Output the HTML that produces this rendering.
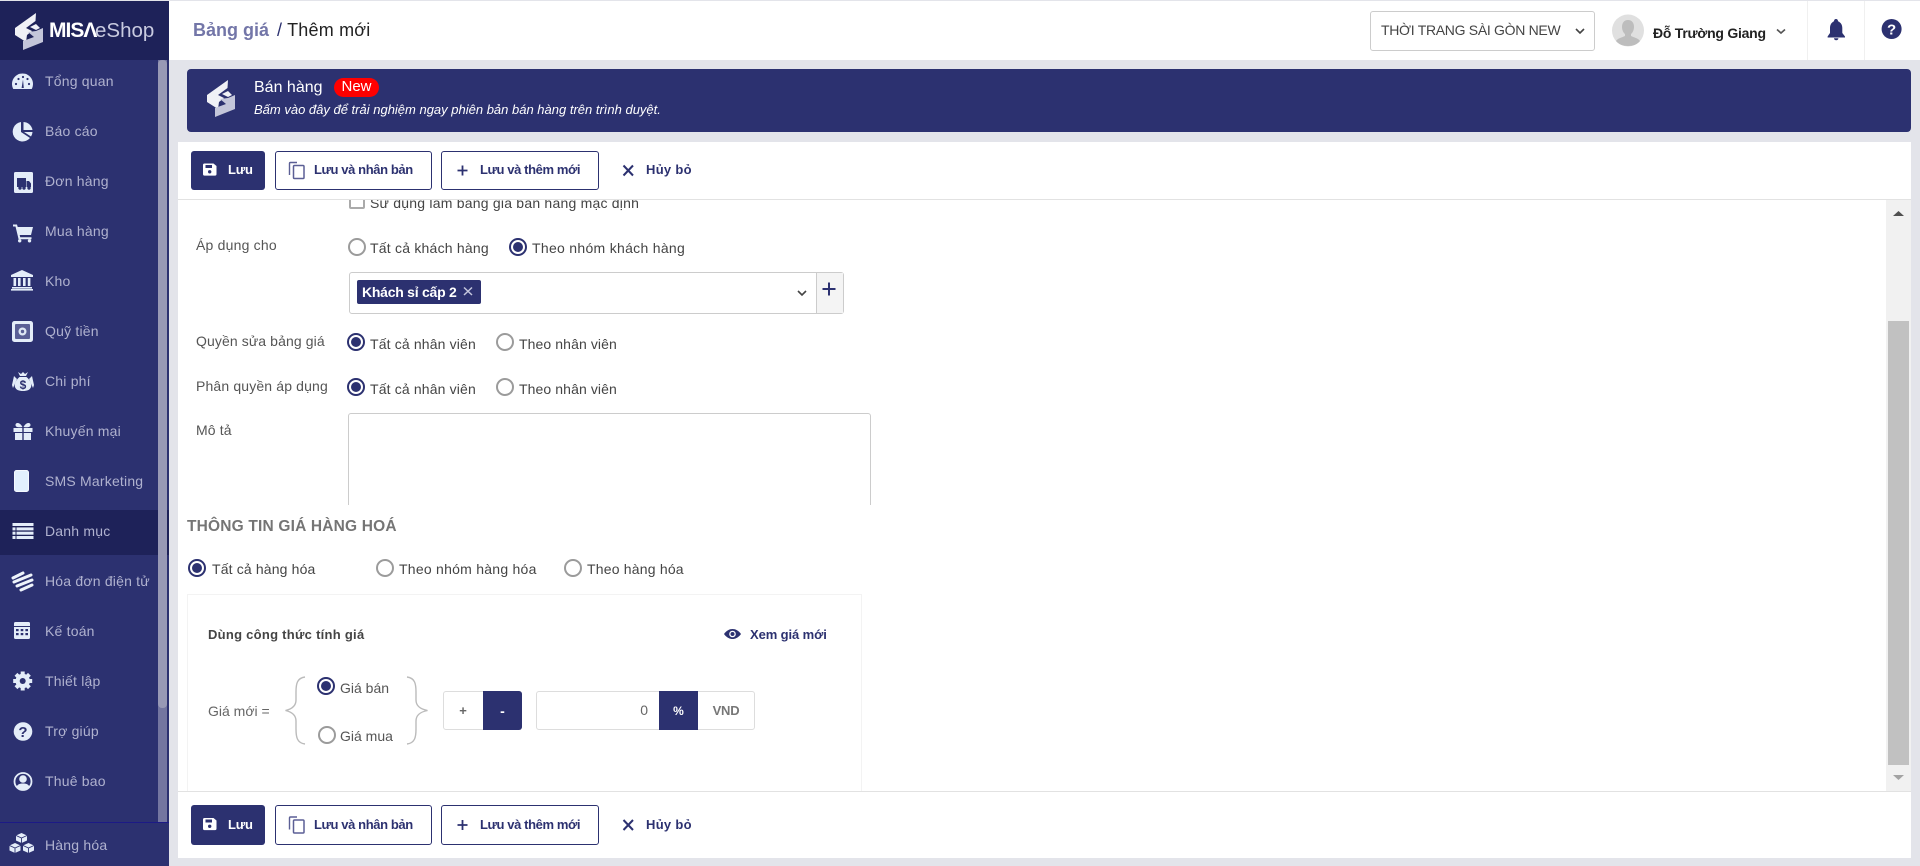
<!DOCTYPE html>
<html lang="vi">
<head>
<meta charset="utf-8">
<title>Bảng giá / Thêm mới</title>
<style>
html,body{margin:0;padding:0;width:1920px;height:866px;overflow:hidden;background:#e3e4ea;font-family:"Liberation Sans",Arial,sans-serif;font-size:14px;color:#444}
div,span{box-sizing:border-box}
.a{position:absolute}
.t{position:absolute;white-space:nowrap;line-height:20px;height:20px}
.m{color:#b0b2cf;left:45px;font-size:14px;letter-spacing:.2px}
.f{color:#444;font-size:14px;letter-spacing:.18px}
.l{color:#555;font-size:14px;left:196px;letter-spacing:.14px}
.r{position:absolute;width:18px;height:18px;border-radius:50%;border:2px solid #9b9b9b;background:#fff}
.r.on{border-color:#2c3170}
.r.on:after{content:"";position:absolute;left:2px;top:2px;width:10px;height:10px;border-radius:50%;background:#2c3170}
.b{position:absolute;border:1px solid #2c3170;border-radius:3px;background:#fff;height:39px}
.bt{color:#2c3170;font-weight:bold;font-size:13px;letter-spacing:-.4px}
</style>
</head>
<body>
<div class="a" style="left:0;top:0;width:1920px;height:1px;background:#e3e4ea"></div>
<!-- header -->
<div class="a" style="left:169px;top:1px;width:1751px;height:59px;background:#fff"></div>
<div class="a" style="left:1807px;top:1px;width:1px;height:59px;background:#f0f0f0"></div>
<div class="a" style="left:1864px;top:1px;width:1px;height:59px;background:#f0f0f0"></div>
<div class="t" style="left:193px;top:20px;font-size:18px;font-weight:bold;color:#7376a8">Bảng giá</div>
<div class="t" style="left:277px;top:20px;font-size:18px;color:#222;letter-spacing:.2px"><span style="color:#2c3170">/</span> Thêm mới</div>
<div class="a" style="left:1370px;top:11px;width:225px;height:40px;border:1px solid #ccc;border-radius:3px;background:#fff"></div>
<div class="t" style="left:1381px;top:20px;font-size:14px;color:#444;letter-spacing:-.3px">THỜI TRANG SÀI GÒN NEW</div>
<div class="t" style="left:1653px;top:23px;font-size:14px;font-weight:bold;color:#222;letter-spacing:-.25px">Đỗ Trường Giang</div>

<!-- sidebar -->
<div class="a" style="left:0;top:1px;width:169px;height:59px;background:#1e2259"></div>
<div class="a" style="left:0;top:60px;width:169px;height:806px;background:#2c3170"></div>
<div class="a" style="left:0;top:510px;width:169px;height:45px;background:#1e2259"></div>
<div class="a" style="left:158px;top:60px;width:9px;height:762px;background:#7476a0"></div>
<div class="a" style="left:158px;top:60px;width:9px;height:648px;background:#9899b5;border-radius:4px"></div>
<div class="a" style="left:0;top:822px;width:169px;height:1px;background:#1c1a86"></div>
<div class="t" style="left:49px;top:21px;font-size:21px;font-weight:bold;color:#fff;letter-spacing:-1px">MISΛ</div>
<div class="t" style="left:95px;top:21px;font-size:20.5px;color:#c9cbe0">eShop</div>
<div class="t m" style="top:71px">Tổng quan</div>
<div class="t m" style="top:121px">Báo cáo</div>
<div class="t m" style="top:171px">Đơn hàng</div>
<div class="t m" style="top:221px">Mua hàng</div>
<div class="t m" style="top:271px">Kho</div>
<div class="t m" style="top:321px">Quỹ tiền</div>
<div class="t m" style="top:371px">Chi phí</div>
<div class="t m" style="top:421px">Khuyến mại</div>
<div class="t m" style="top:471px">SMS Marketing</div>
<div class="t m" style="top:521px">Danh mục</div>
<div class="t m" style="top:571px">Hóa đơn điện tử</div>
<div class="t m" style="top:621px">Kế toán</div>
<div class="t m" style="top:671px">Thiết lập</div>
<div class="t m" style="top:721px">Trợ giúp</div>
<div class="t m" style="top:771px">Thuê bao</div>
<div class="t m" style="top:835px">Hàng hóa</div>

<!-- banner -->
<div class="a" style="left:187px;top:69px;width:1724px;height:63px;background:#2c3170;border-radius:4px"></div>
<div class="t" style="left:254px;top:78px;font-size:16px;color:#fff">Bán hàng</div>
<div class="a" style="left:334px;top:78px;width:45px;height:19px;border-radius:10px;background:#f00"></div>
<div class="t" style="left:334px;width:45px;text-align:center;top:77px;font-size:15px;color:#fff">New</div>
<div class="t" style="left:254px;top:100px;font-size:13px;font-style:italic;color:#fff">Bấm vào đây để trải nghiệm ngay phiên bản bán hàng trên trình duyệt.</div>

<!-- main panels -->
<div class="a" style="left:178px;top:142px;width:1733px;height:716px;background:#fff"></div>
<div class="a" style="left:178px;top:199px;width:1733px;height:1px;background:#e2e2e2"></div>
<div class="a" style="left:178px;top:791px;width:1733px;height:1px;background:#e2e2e2"></div>
<div class="a" style="left:1886px;top:200px;width:25px;height:591px;background:#f1f1f1"></div>
<div class="a" style="left:1888px;top:321px;width:21px;height:444px;background:#c1c1c1"></div>

<!-- toolbar top -->
<div class="a" style="left:191px;top:151px;width:74px;height:39px;border-radius:3px;background:#2c3170"></div>
<div class="t" style="left:228px;top:160px;color:#fff;font-weight:bold;font-size:13px;letter-spacing:-.2px">Lưu</div>
<div class="b" style="left:275px;top:151px;width:157px"></div>
<div class="t bt" style="left:314px;top:160px">Lưu và nhân bản</div>
<div class="b" style="left:441px;top:151px;width:158px"></div>
<div class="t bt" style="left:480px;top:160px">Lưu và thêm mới</div>
<div class="t bt" style="left:646px;top:160px;letter-spacing:.3px">Hủy bỏ</div>
<!-- toolbar bottom -->
<div class="a" style="left:191px;top:805px;width:74px;height:40px;border-radius:3px;background:#2c3170"></div>
<div class="t" style="left:228px;top:815px;color:#fff;font-weight:bold;font-size:13px;letter-spacing:-.2px">Lưu</div>
<div class="b" style="left:275px;top:805px;width:157px;height:40px"></div>
<div class="t bt" style="left:314px;top:815px">Lưu và nhân bản</div>
<div class="b" style="left:441px;top:805px;width:158px;height:40px"></div>
<div class="t bt" style="left:480px;top:815px">Lưu và thêm mới</div>
<div class="t bt" style="left:646px;top:815px;letter-spacing:.3px">Hủy bỏ</div>

<!-- form (clipped scroll area) -->
<div class="a" style="left:178px;top:200px;width:1708px;height:591px;overflow:hidden">
  <div class="a" style="left:-178px;top:-200px;width:1920px;height:866px">
    <div class="a" style="left:349px;top:193px;width:16px;height:16px;border:2px solid #aaa;border-radius:2px"></div>
    <div class="t f" style="left:370px;top:193px;letter-spacing:.22px">Sử dụng làm bảng giá bán hàng mặc định</div>

    <div class="t l" style="top:235px;letter-spacing:.2px">Áp dụng cho</div>
    <div class="r" style="left:348px;top:238px"></div>
    <div class="t f" style="left:370px;top:238px;letter-spacing:.22px">Tất cả khách hàng</div>
    <div class="r on" style="left:509px;top:238px"></div>
    <div class="t f" style="left:532px;top:238px;letter-spacing:.3px">Theo nhóm khách hàng</div>

    <div class="a" style="left:349px;top:272px;width:495px;height:42px;border:1px solid #ccc;border-radius:3px;background:#fff"></div>
    <div class="a" style="left:816px;top:273px;width:27px;height:40px;background:#f4f4f4;border-left:1px solid #ccc"></div>
    <div class="a" style="left:357px;top:280px;width:124px;height:24px;background:#2c3170;border-radius:2px"></div>
    <div class="t" style="left:362px;top:282px;color:#fff;font-size:14px;font-weight:bold;letter-spacing:-.25px">Khách sỉ cấp 2</div>

    <div class="t l" style="top:331px;letter-spacing:.1px">Quyền sửa bảng giá</div>
    <div class="r on" style="left:347px;top:333px"></div>
    <div class="t f" style="left:370px;top:334px;letter-spacing:.15px">Tất cả nhân viên</div>
    <div class="r" style="left:496px;top:333px"></div>
    <div class="t f" style="left:519px;top:334px;letter-spacing:.1px">Theo nhân viên</div>

    <div class="t l" style="top:376px;letter-spacing:.15px">Phân quyền áp dụng</div>
    <div class="r on" style="left:347px;top:378px"></div>
    <div class="t f" style="left:370px;top:379px;letter-spacing:.15px">Tất cả nhân viên</div>
    <div class="r" style="left:496px;top:378px"></div>
    <div class="t f" style="left:519px;top:379px;letter-spacing:.1px">Theo nhân viên</div>

    <div class="t l" style="top:420px">Mô tả</div>
    <div class="a" style="left:348px;top:413px;width:523px;height:100px;border:1px solid #ccc;border-radius:3px;background:#fff"></div>
    <div class="a" style="left:340px;top:505px;width:540px;height:12px;background:#fff"></div>

    <div class="t" style="left:187px;top:517px;font-size:15.5px;font-weight:bold;color:#757575;letter-spacing:.18px">THÔNG TIN GIÁ HÀNG HOÁ</div>
    <div class="r on" style="left:188px;top:559px"></div>
    <div class="t f" style="left:212px;top:559px;letter-spacing:.15px">Tất cả hàng hóa</div>
    <div class="r" style="left:376px;top:559px"></div>
    <div class="t f" style="left:399px;top:559px;letter-spacing:.25px">Theo nhóm hàng hóa</div>
    <div class="r" style="left:564px;top:559px"></div>
    <div class="t f" style="left:587px;top:559px;letter-spacing:.2px">Theo hàng hóa</div>

    <div class="a" style="left:187px;top:594px;width:675px;height:220px;border:1px solid #f3f3f3"></div>
    <div class="t" style="left:208px;top:625px;font-size:13px;font-weight:bold;color:#444;letter-spacing:.27px">Dùng công thức tính giá</div>
    <div class="t bt" style="left:750px;top:625px;letter-spacing:-.1px">Xem giá mới</div>
    <div class="t" style="left:208px;top:701px;font-size:14px;color:#666">Giá mới =</div>
    <div class="r on" style="left:317px;top:677px"></div>
    <div class="t" style="left:340px;top:678px;font-size:14px;color:#555">Giá bán</div>
    <div class="r" style="left:318px;top:726px"></div>
    <div class="t" style="left:340px;top:726px;font-size:14px;color:#555">Giá mua</div>

    <div class="a" style="left:443px;top:691px;width:79px;height:39px;border:1px solid #ddd;border-radius:3px;background:#fff"></div>
    <div class="a" style="left:483px;top:691px;width:39px;height:39px;background:#2c3170;border-radius:0 3px 3px 0"></div>
    <div class="t" style="left:443px;width:40px;text-align:center;top:701px;font-size:13px;font-weight:bold;color:#666">+</div>
    <div class="t" style="left:483px;width:39px;text-align:center;top:701px;font-size:14px;font-weight:bold;color:#fff">-</div>
    <div class="a" style="left:536px;top:691px;width:219px;height:39px;border:1px solid #ddd;border-radius:3px;background:#fff"></div>
    <div class="a" style="left:659px;top:691px;width:39px;height:39px;background:#2c3170"></div>
    <div class="t" style="left:600px;width:48px;text-align:right;top:700px;font-size:14px;color:#666">0</div>
    <div class="t" style="left:659px;width:39px;text-align:center;top:701px;font-size:12px;font-weight:bold;color:#fff">%</div>
    <div class="t" style="left:698px;width:56px;text-align:center;top:701px;font-size:13px;font-weight:bold;color:#777;letter-spacing:-.2px">VND</div>
  </div>
</div>

<!-- icons overlay -->
<svg class="a" style="left:0;top:0" width="1920" height="866" viewBox="0 0 1920 866" xmlns="http://www.w3.org/2000/svg">
  <!-- logo -->
  <g>
    <path d="M36 13L35.5 21L26 28L32 31L27 35L26 42L15 35V28Z" fill="#f0f1f6"/>
    <path d="M30 27L36 24L40 28L36 30Z" fill="#f0f1f6"/>
    <path d="M43 28V42L23 50V41L34 37L28 32L36 31Z" fill="#c4c6da"/>
  </g>
  <g transform="translate(192,67)">
    <path d="M36 13L35.5 21L26 28L32 31L27 35L26 42L15 35V28Z" fill="#f0f1f6"/>
    <path d="M30 27L36 24L40 28L36 30Z" fill="#f0f1f6"/>
    <path d="M43 28V42L23 50V41L34 37L28 32L36 31Z" fill="#c4c6da"/>
  </g>
  <g fill="#e4edf9">
    <!-- gauge -->
    <path d="M13.3 89A10.5 10.5 0 1 1 31.7 89Z"/>
    <g fill="#2c3170"><circle cx="16" cy="84" r="1.1"/><circle cx="18.5" cy="79" r="1.1"/><circle cx="23" cy="77" r="1.1"/><circle cx="27.5" cy="79" r="1.1"/><circle cx="29" cy="84" r="1.1"/><path d="M21.6 88L23 79.5L23.8 88Z"/></g>
    <!-- pie -->
    <path d="M21 132V122A9.8 9.8 0 1 0 30 138Z"/>
    <path d="M23.5 122A9.5 9.5 0 0 1 32.5 130H23.5Z"/>
    <path d="M24 132H32.5A9.5 9.5 0 0 1 31 136.5Z"/>
    <!-- truck -->
    <rect x="14" y="172" width="19" height="21" rx="1.5"/>
    <g fill="#2c3170"><rect x="17" y="178" width="9" height="9"/><path d="M26.5 181H29L31 183.5V187H26.5Z"/><circle cx="20" cy="188" r="1.7"/><circle cx="24" cy="188" r="1.7"/><circle cx="29" cy="188" r="1.7"/></g>
    <!-- cart -->
    <path d="M13 224.5h4l.7 2.5H33l-2 8H19.7l.5 2.2H31.5v2H18.6L15.5 226.5H13z"/>
    <circle cx="19.7" cy="240.8" r="1.7"/><circle cx="29.5" cy="240.8" r="1.7"/>
    <!-- bank -->
    <path d="M22 270L33 275V277H11V275Z"/>
    <rect x="13.5" y="278" width="2.6" height="8"/><rect x="18" y="278" width="2.6" height="8"/><rect x="23" y="278" width="2.6" height="8"/><rect x="27.8" y="278" width="2.6" height="8"/>
    <rect x="12" y="287" width="20" height="1.6"/><rect x="11" y="289" width="22" height="1.6"/>
    <!-- safe -->
    <rect x="12" y="321" width="21" height="21" rx="2.5"/>
    <rect x="15" y="324" width="15" height="15" rx="1" fill="#5a5f96"/>
    <circle cx="22.5" cy="331.5" r="4" fill="#dfe8f5"/><circle cx="22.5" cy="331.5" r="1.7" fill="#5a5f96"/>
    <!-- money bag -->
    <path d="M18 372L20 376H26L28 372L25 374L23 372L21 374Z"/>
    <path d="M19.5 377H26.5C30 380 32 384 31 387C30 390 27 391 23 391C19 391 16 390 15 387C14 384 16 380 19.5 377Z"/>
    <path d="M14 376L17 379L13 388L12 385Z M32 376L29 379L33 388L34 385Z"/>
    <text x="23" y="389" font-size="12" font-weight="bold" text-anchor="middle" fill="#2c3170" font-family="Liberation Sans">$</text>
    <!-- gift -->
    <path d="M22.5 427C20 422 15.5 422 15.5 425C15.5 427 18 427.7 22.5 427ZM23.5 427C26 422 30.5 422 30.5 425C30.5 427 28 427.7 23.5 427Z"/>
    <rect x="13.5" y="428" width="8.8" height="4"/><rect x="23.7" y="428" width="8.8" height="4"/>
    <rect x="15" y="433" width="7.3" height="7"/><rect x="23.7" y="433" width="7.3" height="7"/>
    <!-- phone -->
    <rect x="14.5" y="470.5" width="14" height="21" rx="2" fill="#e2f0fe" stroke="#f5f9ff"/>
    <!-- list -->
    <g><rect x="12.5" y="523" width="21" height="3"/><rect x="12.5" y="527.4" width="3" height="3"/><rect x="16.5" y="527.4" width="17" height="3"/><rect x="12.5" y="531.7" width="3" height="3"/><rect x="16.5" y="531.7" width="17" height="3"/><rect x="12.5" y="536" width="3" height="3"/><rect x="16.5" y="536" width="17" height="3"/></g>
    <!-- invoice stack -->
    <g fill="none" stroke="#eef3fb" stroke-width="3" stroke-linecap="round"><path d="M13 578L23 573"/><path d="M14 582L31 575"/><path d="M17 586L32 580"/><path d="M21 590L32 585"/></g>
    <!-- calc -->
    <rect x="14" y="622" width="16" height="17" rx="1.5"/>
    <g fill="#2c3170"><rect x="14" y="626" width="16" height="1"/><rect x="16" y="629" width="2.6" height="2.2"/><rect x="20.7" y="629" width="2.6" height="2.2"/><rect x="25.4" y="629" width="2.6" height="2.2"/><rect x="16" y="633" width="2.6" height="2.2"/><rect x="20.7" y="633" width="2.6" height="2.2"/><rect x="25.4" y="633" width="2.6" height="2.2"/></g>
    <!-- gear -->
    <g transform="translate(22.7,681)">
      <circle r="7.2"/>
      <g><rect x="-2" y="-9.5" width="4" height="19"/><rect x="-2" y="-9.5" width="4" height="19" transform="rotate(45)"/><rect x="-2" y="-9.5" width="4" height="19" transform="rotate(90)"/><rect x="-2" y="-9.5" width="4" height="19" transform="rotate(135)"/></g>
      <circle r="3" fill="#2c3170"/>
    </g>
    <!-- help -->
    <circle cx="23" cy="731.5" r="9.3"/>
    <text x="23" y="737" font-size="15" font-weight="bold" text-anchor="middle" fill="#2c3170" font-family="Liberation Sans">?</text>
    <!-- user -->
    <circle cx="23" cy="781.5" r="8.5" fill="none" stroke="#e4edf9" stroke-width="1.8"/>
    <circle cx="23" cy="779" r="3.8"/>
    <path d="M16.5 787C17.5 784 20 783.5 23 783.5C26 783.5 28.5 784 29.5 787C28 789 26 790 23 790C20 790 18 789 16.5 787Z"/>
    <!-- cubes -->
    <g>
      <path d="M21.5 833L27 835.5V840.5L21.5 843L16 840.5V835.5Z"/>
      <path d="M15 843L20.5 845.5V850.5L15 853L9.5 850.5V845.5Z"/>
      <path d="M28.5 843L34 845.5V850.5L28.5 853L23 850.5V845.5Z"/>
      <g fill="none" stroke="#2c3170" stroke-width=".9"><path d="M16 835.5L21.5 838L27 835.5M21.5 838V843"/><path d="M9.5 845.5L15 848L20.5 845.5M15 848V853"/><path d="M23 845.5L28.5 848L34 845.5M28.5 848V853"/></g>
    </g>
  </g>

  <!-- toolbar icons top -->
  <g>
    <path d="M203 165Q203 163.5 204.5 163.5H213.5L216.5 166V174Q216.5 175.6 215 175.6H204.5Q203 175.6 203 174Z" fill="#fff"/>
    <rect x="205.5" y="165" width="6.5" height="3" fill="#2c3170"/><circle cx="209.7" cy="171.8" r="1.7" fill="#2c3170"/>
    <path d="M297 162.5H290.5Q289.5 162.5 289.5 163.5V175" fill="none" stroke="#5b5f95" stroke-width="1.4"/>
    <rect x="293.5" y="165.5" width="10.5" height="13" rx="1" fill="none" stroke="#5b5f95" stroke-width="1.5"/>
    <path d="M457.5 170.5H467.5M462.5 165.5V175.5" stroke="#2c3170" stroke-width="1.8" fill="none"/>
    <path d="M623.5 165.5L633 175.5M633 165.5L623.5 175.5" stroke="#2c3170" stroke-width="2" fill="none"/>
  </g>
  <g transform="translate(0,654.5)">
    <path d="M203 165Q203 163.5 204.5 163.5H213.5L216.5 166V174Q216.5 175.6 215 175.6H204.5Q203 175.6 203 174Z" fill="#fff"/>
    <rect x="205.5" y="165" width="6.5" height="3" fill="#2c3170"/><circle cx="209.7" cy="171.8" r="1.7" fill="#2c3170"/>
    <path d="M297 162.5H290.5Q289.5 162.5 289.5 163.5V175" fill="none" stroke="#5b5f95" stroke-width="1.4"/>
    <rect x="293.5" y="165.5" width="10.5" height="13" rx="1" fill="none" stroke="#5b5f95" stroke-width="1.5"/>
    <path d="M457.5 170.5H467.5M462.5 165.5V175.5" stroke="#2c3170" stroke-width="1.8" fill="none"/>
    <path d="M623.5 165.5L633 175.5M633 165.5L623.5 175.5" stroke="#2c3170" stroke-width="2" fill="none"/>
  </g>

  <!-- header icons -->
  <path d="M1576 29L1580 33L1584 29" fill="none" stroke="#444" stroke-width="1.6"/>
  <circle cx="1628" cy="30.5" r="16" fill="#e0e0e0"/>
  <path d="M1628 20C1632 20 1634 23 1634 27C1634 30 1632.5 33 1631 34V36C1634 37.5 1638 38 1640 41C1637 44.5 1633 46 1628 46C1623 46 1619 44.5 1616 41C1618 38 1622 37.5 1625 36V34C1623.5 33 1622 30 1622 27C1622 23 1624 20 1628 20Z" fill="#bdbdbd"/>
  <path d="M1777 29.5L1781 33L1785 29.5" fill="none" stroke="#555" stroke-width="1.6"/>
  <path d="M1836 19C1837.3 19 1838 20 1838 21.2C1841 22.5 1842.3 25 1842.3 28V33L1845 36.5V37.5H1827.6V36.5L1830 33V28C1830 25 1831.3 22.5 1834 21.2C1834 20 1834.7 19 1836 19Z" fill="#2c3170"/>
  <path d="M1834 38.3H1838.4C1838.4 39.5 1837.4 40.3 1836.2 40.3C1835 40.3 1834 39.5 1834 38.3Z" fill="#2c3170"/>
  <circle cx="1891.6" cy="29" r="10" fill="#2c3170"/>
  <text x="1891.6" y="34.5" font-size="15" font-weight="bold" text-anchor="middle" fill="#fff" font-family="Liberation Sans">?</text>

  <!-- form icons -->
  <path d="M464 287.5L472 295M472 287.5L464 295" stroke="#c5c7dd" stroke-width="1.5" fill="none"/>
  <path d="M798 291L802 295L806 291" fill="none" stroke="#444" stroke-width="1.6"/>
  <path d="M822.5 289H835.5M829 282.5V295.5" fill="none" stroke="#2c3170" stroke-width="2"/>
  <path d="M724 634C726.5 630.5 729.5 629 732.5 629C735.5 629 738.5 630.5 741 634C738.5 637.5 735.5 639 732.5 639C729.5 639 726.5 637.5 724 634Z" fill="#2c3170"/>
  <circle cx="732.5" cy="634" r="3.3" fill="#fff"/><circle cx="732.5" cy="634" r="2" fill="#2c3170"/>
  <path d="M305 677C297 678 296 684 296 692V700C296 706 292 709 285.5 710.5C292 712 296 715 296 721V729C296 737 297 743 305 744" fill="none" stroke="#bbb" stroke-width="1.4"/>
  <path d="M407 677C415 678 416 684 416 692V700C416 706 420 709 427.5 710.5C420 712 416 715 416 721V729C416 737 415 743 407 744" fill="none" stroke="#bbb" stroke-width="1.4"/>

  <!-- scrollbar arrows -->
  <path d="M1893 216L1898.5 211L1904 216Z" fill="#505050"/>
  <path d="M1893 775L1898.5 780L1904 775Z" fill="#a3a3a3"/>
</svg>
</body>
</html>
